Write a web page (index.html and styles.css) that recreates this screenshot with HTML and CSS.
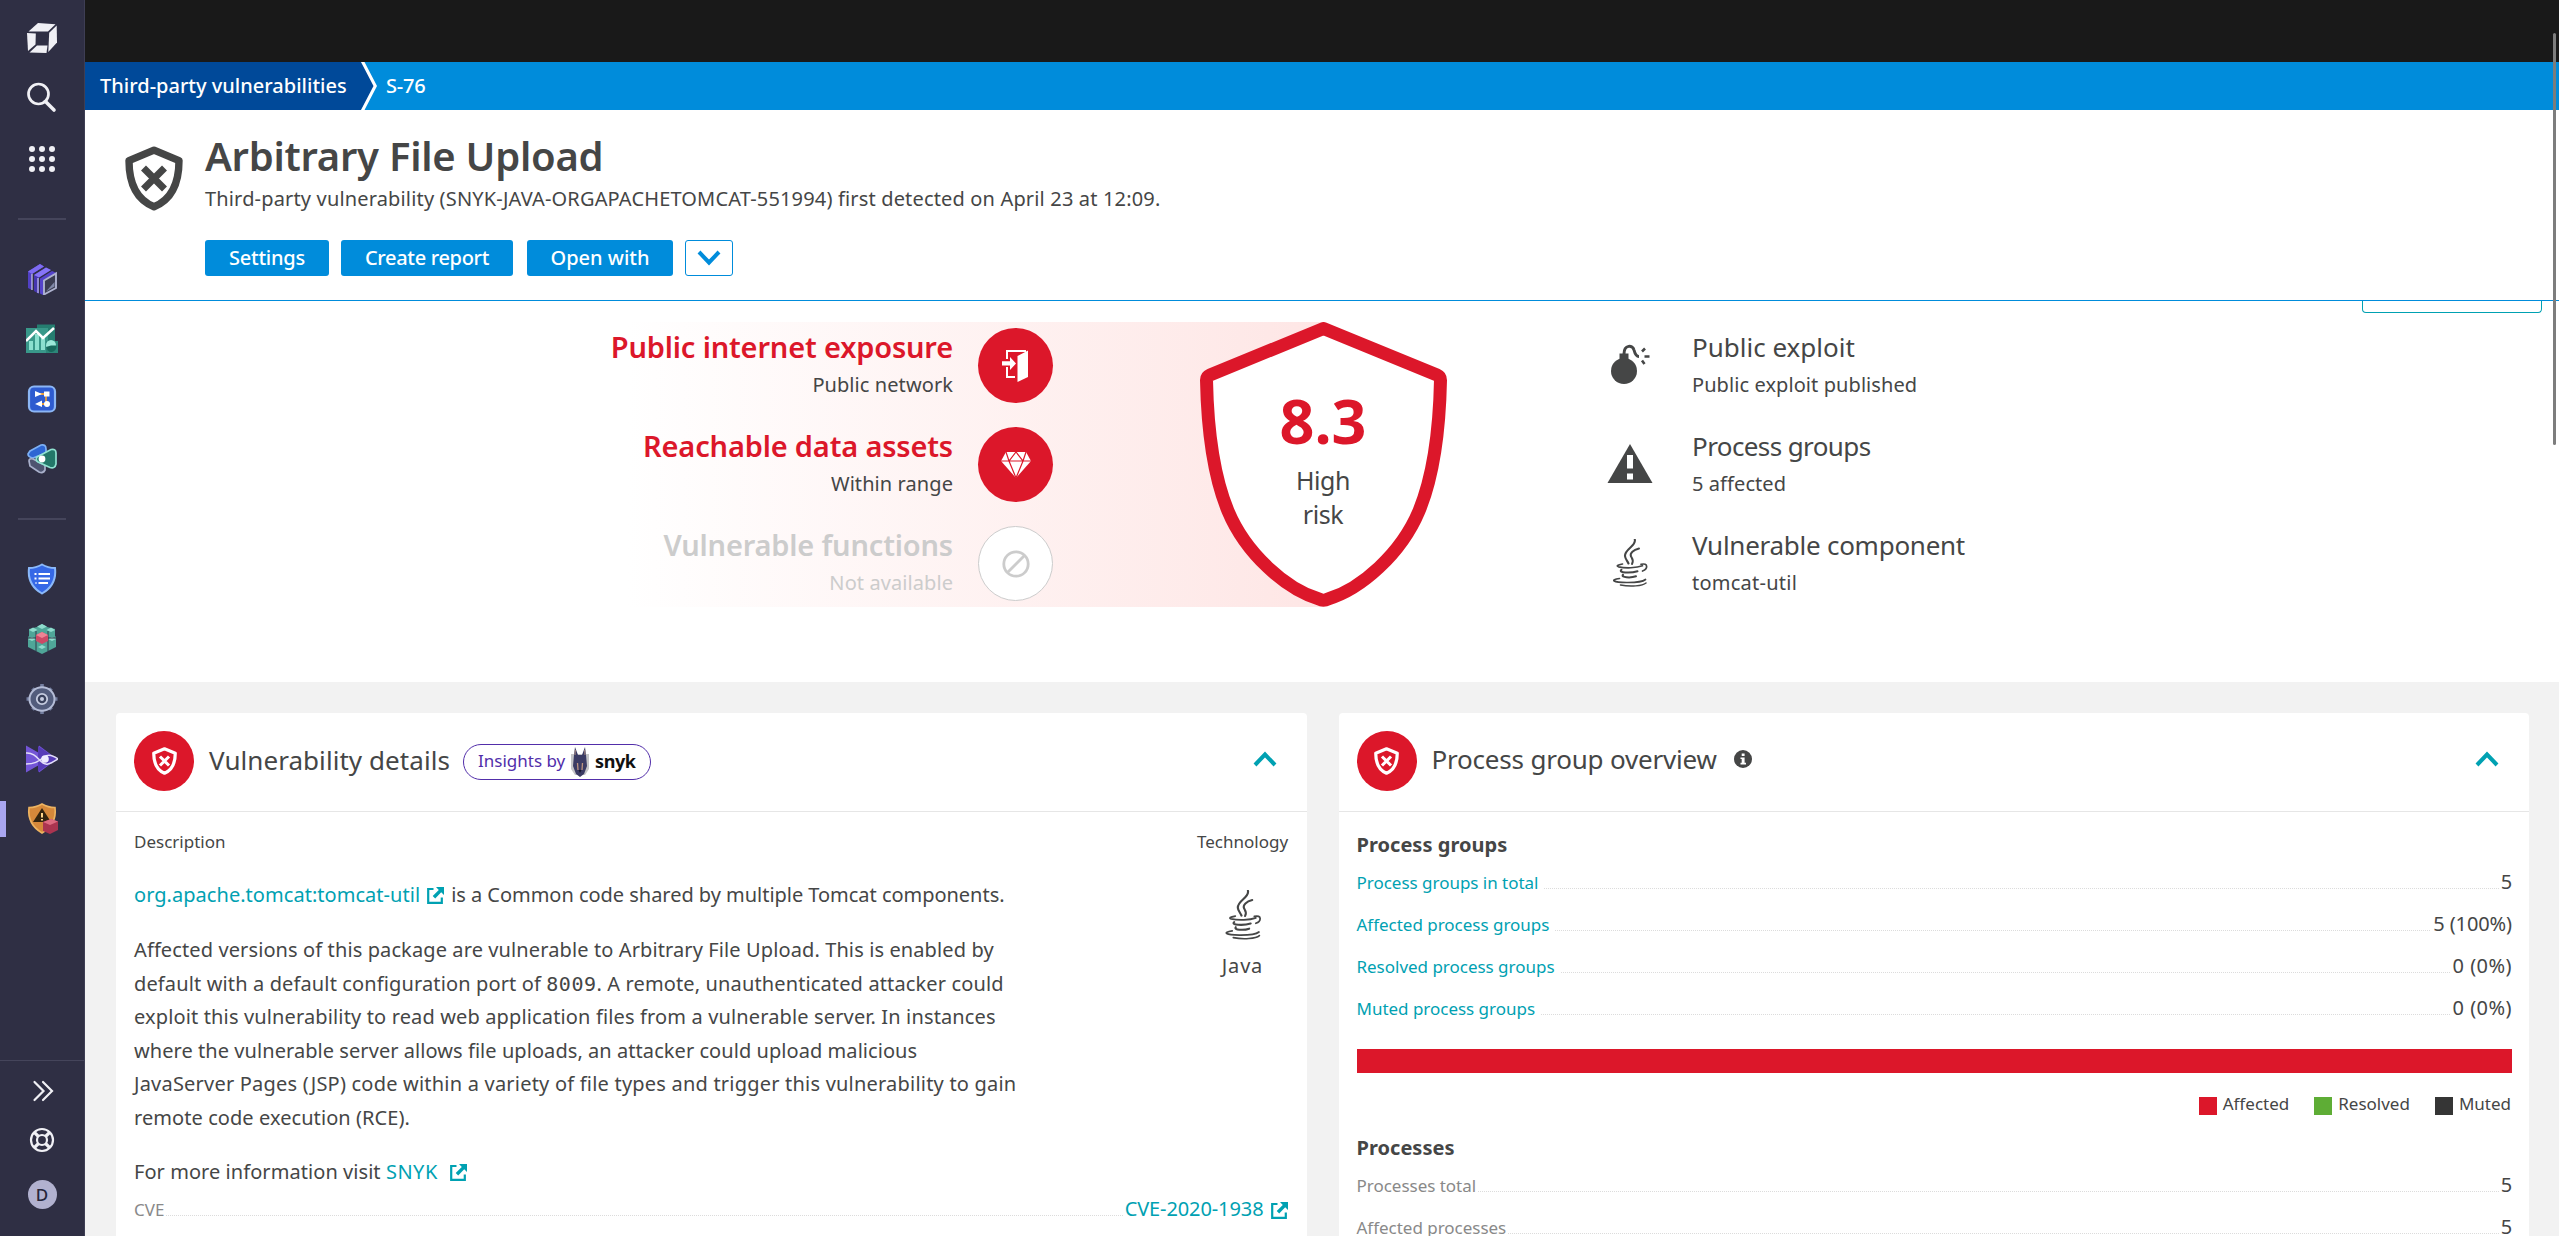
FILE: index.html
```
<!DOCTYPE html>
<html lang="en">
<head>
<meta charset="utf-8">
<title>Arbitrary File Upload</title>
<link rel="stylesheet" href="styles.css">
</head>
<body>
<svg width="0" height="0" class="defs">
  <defs>
    <symbol id="shield-x" viewBox="0 0 58 65">
      <path d="M29 4.2 L4 14.6 C4 39 12 54 29 60.8 C46 54 54 39 54 14.6 Z" fill="none" stroke="currentColor" stroke-width="7.4" stroke-linejoin="round"/>
      <path d="M18.500 22 L39.500 43 M39.500 22 L18.500 43" stroke="currentColor" stroke-width="7" fill="none"/>
    </symbol>
    <symbol id="java" viewBox="0 0 35 48">
      <g fill="none" stroke="currentColor" stroke-linecap="round">
        <path d="M22.300 .5 C24 7 12 10 12.500 17 C12.700 20 15 22 16 24.500" stroke-width="2.100"/>
        <path d="M26.500 9.500 C21 11 17 14 18.500 17.500 C20 20 21.500 21.500 19.500 25" stroke-width="2"/>
        <path d="M10 25 C5 26 3.500 27 6 27.800 C13 29.500 24 29 30 26.800" stroke-width="1.700"/>
        <path d="M28.500 25.300 C36 23.500 35.500 30 30 32" stroke-width="1.700"/>
        <path d="M9 30.800 C5 33.800 18 34.500 25 32.200" stroke-width="2"/>
        <path d="M10.500 35.800 C8 38.500 18 39.200 23.500 37.300" stroke-width="2"/>
        <path d="M7 39.500 C-3 41 .5 43.300 14 43.500 C24 43.600 30 43 33 40.500" stroke-width="1.700"/>
        <path d="M8 46 C18 48 30 47 33.500 44" stroke-width="1.500"/>
      </g>
    </symbol>
    <symbol id="ext" viewBox="0 0 17 17">
      <path d="M6.500 2 H1.200 V15.800 H14.800 V10.500" fill="none" stroke="currentColor" stroke-width="2.200"/>
      <path d="M9 0 H17 V8 L14.200 5.200 L8.200 11.500 L5.700 9 L11.800 2.900 Z" fill="currentColor"/>
    </symbol>
    <symbol id="chevron" viewBox="0 0 24 16">
      <path d="M2 14 L12 3.500 L22 14" fill="none" stroke="currentColor" stroke-width="4"/>
    </symbol>
  </defs>
</svg>
<div class="app">
  <nav class="sidebar">
    <svg class="nav-icon" viewBox="0 0 32 32"><g fill="#f0f0f5"><path d="M2.500 9.500 L12 1 L29.500 2.200 L22 9.500 Z"/><path d="M30.700 3.500 L31 20.500 L22.300 30 L23.200 10.800 Z"/><path d="M1 11 L9.800 11.500 L9.500 22.500 L2 29 Z"/><path d="M3.500 30.500 L11 23.500 L21.500 23.500 L20.500 31 Z"/></g></svg>
    <svg class="nav-icon" viewBox="0 0 32 32"><circle cx="12.500" cy="13" r="10" fill="none" stroke="#f0f0f5" stroke-width="2.700"/><path d="M19.500 20.500 L28 29" stroke="#f0f0f5" stroke-width="3.600" stroke-linecap="round"/></svg>
    <svg class="nav-icon" viewBox="0 0 32 32"><g fill="#f0f0f5"><circle cx="6" cy="6" r="3"/><circle cx="16" cy="6" r="3"/><circle cx="26" cy="6" r="3"/><circle cx="6" cy="16" r="3"/><circle cx="16" cy="16" r="3"/><circle cx="26" cy="16" r="3"/><circle cx="6" cy="26" r="3"/><circle cx="16" cy="26" r="3"/><circle cx="26" cy="26" r="3"/></g></svg>
    <div class="nav-rule"></div>
    <svg class="nav-icon" viewBox="0 0 32 32"><path d="M2 8.500 L14 1 L18 3.500 L6 11 V27 L2 25 Z" fill="#5140c4"/><path d="M2 8.500 L14 1 L18 3.500 L6 11 Z" fill="#7e6bf2"/><path d="M8 12 L20 4.500 L25 7 L13 14.500 V31 L8 28 Z" fill="#4636ae"/><path d="M8 12 L20 4.500 L25 7 L13 14.500 Z" fill="#8674f7"/><path d="M6 11 V27 M12 15 V30" stroke="#c9c6ee" stroke-width="1.200"/><path d="M14 15.500 L26 8 L30.500 10 L18 17 V32.500 L14 30.500 Z" fill="#5443cb"/><path d="M18 17.500 L30 10.500 V25 L18 31.500 Z" fill="#3b3d52" stroke="#aeb2cf" stroke-width="1.900"/><path d="M20 28.500 L28.500 23.500 V19 Z" fill="#8088a8"/></svg>
    <svg class="nav-icon" viewBox="0 0 32 32"><path d="M11 1.500 H29 V18 H11 Z" fill="#257d70"/><path d="M0 5 H22 V30 H0 Z" fill="#39988a"/><path d="M20 18 H32 V30 H20 Z" fill="#2c8779"/><path d="M3 18 H7 V27 H3 Z M9 11 H13 V27 H9 Z M15 15 H19 V27 H15 Z" fill="#8be0cf"/><ellipse cx="25" cy="22.500" rx="5" ry="5.500" fill="#9ce8d9"/><path d="M25 22.500 H30.500 A5 5.500 0 0 1 20 24 Z" fill="#17695c"/><path d="M0 18 L10 8 L17 15 L28 5" fill="none" stroke="#fff" stroke-width="2.500"/></svg>
    <svg class="nav-icon" viewBox="0 0 32 32"><rect x="3" y="3.500" width="26" height="25" rx="5" fill="#2e5bd0" stroke="#8bb6f5" stroke-width="2.200"/><path d="M13 11 H20 V21 H13" fill="none" stroke="#e59b3c" stroke-width="1.800"/><path d="M9 8 L16 11 L9 14 Z M16 17.500 L9 21 L16 24 Z" fill="#fff"/><path d="M18 8.500 H23.500 V13.500 H18 Z" fill="#fff"/><circle cx="21" cy="21" r="3" fill="#fff"/></svg>
    <svg class="nav-icon" viewBox="0 0 32 32"><path d="M4 8 L15 2 Q20 1 20 6 V10 L7 15 Q2 14 2 11 Z" fill="#2d66d3" stroke="#7db0f4" stroke-width="1.700"/><path d="M3 18 Q3 15 7 16 L19 22 V27 Q17 31 13 29 L4 23 Z" fill="#4d5470" stroke="#a9b0cb" stroke-width="1.700"/><path d="M11 14 L25 6.500 Q30 5.500 30 10 V21 Q29 26 24 24.500 L12 19 Q9 17 11 14 Z" fill="#237869" stroke="#8fe2d1" stroke-width="1.700"/><circle cx="16" cy="16" r="3.400" fill="#fff"/></svg>
    <div class="nav-rule"></div>
    <svg class="nav-icon" viewBox="0 0 32 32"><path d="M16 1.500 Q22 5 29 5 Q31 22 16 30.500 Q1 22 3 5 Q10 5 16 1.500 Z" fill="#3568e6" stroke="#8bb9fa" stroke-width="2"/><path d="M12.500 11 H24 M12.500 15.500 H24 M12.500 20 H22" stroke="#fff" stroke-width="1.800"/><path d="M8.500 11 H10.500 M8.500 15.500 H10.500 M9.500 20 H10.500" stroke="#fff" stroke-width="2"/></svg>
    <svg class="nav-icon" viewBox="0 0 32 32"><path d="M16 1 L21 4 L29 6 V13 L30 14 V24 L22 28 L16 31 L10 28 L2 24 V14 L3 13 V6 L11 4 Z" fill="#4fa698"/><path d="M16 1 L21 3.500 L16 6 L11 3.500 Z M7 4.500 L11.500 7 L7 9 L3 7 Z M25 4.500 L29 7 L25 9 L20.500 7 Z M6 14 L10 16 L6 18 L2 16 Z M26 14 L30 16 L26 18 L22 16 Z M16 22 L20 24 L16 26 L12 24 Z" fill="#8fdccd"/><path d="M10 8 V28 M22 8 V28 M2 15 H10 M22 15 H30" stroke="#2e3043" stroke-width=".9"/><path d="M16 9 L22 12 V18 L16 21 L10 18 V12 Z" fill="#cc4a66"/><path d="M16 9 L22 12 L16 15 L10 12 Z" fill="#ee8494"/></svg>
    <svg class="nav-icon" viewBox="0 0 32 32"><path d="M16 1 V31 M.5 16 H31.500 M6.500 5.500 L25.500 26.500 M25.500 5.500 L6.500 26.500" stroke="#747e9f" stroke-width="3.600"/><ellipse cx="16" cy="16" rx="12.500" ry="11.800" fill="#525c7c" stroke="#b4bcd6" stroke-width="2"/><circle cx="16" cy="16" r="5.200" fill="#39415c" stroke="#c6cce0" stroke-width="1.800"/><circle cx="16" cy="16" r="2" fill="#c6cce0"/></svg>
    <svg class="nav-icon" viewBox="0 0 32 32"><path d="M0 2.500 L13 10 V2.500 L31 16 L13 29.500 V22 L0 29.500 Z" fill="#7355d6"/><path d="M12 3 L31 16 L12 29 Z" fill="#573cb8"/><path d="M0 10 C12 9 14 23 22 21 C27 20 30 17 32 16 C28 13 23 10 18 14 C12 19 8 21 0 21" fill="none" stroke="#e3defa" stroke-width="1.500"/><circle cx="19" cy="16" r="3.800" fill="#eeebff"/></svg>
    <div class="nav-active">
      <svg class="nav-icon" viewBox="0 0 32 32"><path d="M16 1 Q22 4.500 29 4.500 Q31 21 16 30 Q1 21 3 4.500 Q10 4.500 16 1 Z" fill="#d5883a" stroke="#edb361" stroke-width="1.600"/><path d="M16 5 L25 19 H7 Z" fill="#33240f"/><path d="M16 10 V14.500 M16 16 V17.500" stroke="#ffd589" stroke-width="2"/><path d="M17 19 L25 16 L32 18.500 V27 L24 31 L17 28 Z" fill="#aa3450"/><path d="M17 19 L25 16 L32 18.500 L24 22 Z" fill="#dd6a80"/></svg>
    </div>
    <div class="nav-bottom">
      <svg class="nav-icon small-chev" viewBox="0 0 32 32"><path d="M8.500 7 L17.500 16 L8.500 25 M17 7 L26 16 L17 25" fill="none" stroke="#f0f0f5" stroke-width="2.200" stroke-linecap="round"/></svg>
      <svg class="nav-icon life" viewBox="0 0 32 32"><g fill="none" stroke="#f0f0f5" stroke-width="2.200"><circle cx="16" cy="16" r="11"/><circle cx="16" cy="16" r="5"/></g><path d="M8.300 8.300 L12.500 12.500 M23.700 8.300 L19.500 12.500 M8.300 23.700 L12.500 19.500 M23.700 23.700 L19.500 19.500" stroke="#f0f0f5" stroke-width="3.200"/></svg>
      <div class="avatar">D</div>
    </div>
  </nav>

  <main class="main">
    <div class="topbar"></div>
    <div class="crumbs">
      <span class="crumb-root">Third-party vulnerabilities</span>
      <svg class="crumb-arrow" width="17" height="48" viewBox="0 0 17 48"><path d="M0 0 L14 24 L0 48 Z" fill="#004999"/><path d="M0 0 H3.500 L16 24 L3.500 48 H0 L12.500 24 Z" fill="#fff"/></svg>
      <span class="crumb-current">S-76</span>
    </div>

    <header class="page-header">
      <svg class="page-icon"><use href="#shield-x"/></svg>
      <div>
        <h1>Arbitrary File Upload</h1>
        <p class="subtitle">Third-party vulnerability (SNYK-JAVA-ORGAPACHETOMCAT-551994) first detected on April 23 at 12:09.</p>
        <div class="actions">
          <span class="btn btn-settings">Settings</span>
          <span class="btn btn-report">Create report</span>
          <span class="btn btn-open">Open with</span>
          <span class="btn-more"><svg width="24" height="16"><use href="#chevron"/></svg></span>
        </div>
      </div>
    </header>

    <section class="overview">
      <div class="clipped-button"></div>
      <div class="risk">
        <div class="factors">
          <div class="factor">
            <div><div class="factor-title">Public internet exposure</div><div class="factor-sub">Public network</div></div>
            <div class="dot"><svg width="30" height="34" viewBox="0 0 30 34"><path d="M6 10 V2 H25 M6 18 V28 H14" fill="none" stroke="#fff" stroke-width="2"/><path d="M16.500 7 L27 1.500 V28 L16.500 33 Z" fill="#fff"/><path d="M1 12.300 H9 V8 L15 14.500 L9 21 V16.500 H1 Z" fill="#fff"/></svg></div>
          </div>
          <div class="factor">
            <div><div class="factor-title">Reachable data assets</div><div class="factor-sub">Within range</div></div>
            <div class="dot"><svg width="30" height="28" viewBox="0 0 30 28"><path d="M5 1 H25 L30 10 L15 27 L0 10 Z" fill="#fff"/><path d="M0 10 H30 M5 1 L8 10 L15 1 L22 10 L25 1 M8 10 L15 27 L22 10" fill="none" stroke="#dc172a" stroke-width="1.200"/></svg></div>
          </div>
          <div class="factor off">
            <div><div class="factor-title">Vulnerable functions</div><div class="factor-sub">Not available</div></div>
            <div class="dot"><svg width="28" height="28" viewBox="0 0 28 28"><g fill="none" stroke="#ccc" stroke-width="2.800"><circle cx="14" cy="14" r="12.200"/><path d="M22.500 5.500 L5.500 22.500"/></g></svg></div>
          </div>
        </div>
        <div class="score">
          <svg class="score-shield" viewBox="0 0 247 285"><path d="M123.500 6.500 L10 53 Q6.500 54.500 6.500 58 C7.500 108 13.500 154 28 189 C46 232 86 267 119 277 Q123.500 279.500 128 277 C161 267 201 232 219 189 C233.500 154 239.500 108 240.500 58 Q240.500 54.500 237 53 Z" fill="#fff" stroke="#dc172a" stroke-width="13" stroke-linejoin="round"/></svg>
          <div class="score-text"><span class="score-num">8.3</span><span class="score-word">High</span><span class="score-word">risk</span></div>
        </div>
      </div>
      <div class="facts">
        <div class="fact">
          <svg width="46" height="48" viewBox="0 0 46 48"><circle cx="17" cy="30" r="13" fill="#454646"/><path d="M12.500 12.500 H21.500 V20 H12.500 Z" fill="#454646"/><path d="M17 13 C17 3 26 4 27 9 C28 13 29 15.500 32 15.500" fill="none" stroke="#454646" stroke-width="3"/><path d="M35 10.500 L38 7.500 M37.500 15.500 H42.500 M35 19.500 L37.500 23" stroke="#454646" stroke-width="2.600"/></svg>
          <div><div class="fact-title t1">Public exploit</div><div class="factor-sub">Public exploit published</div></div>
        </div>
        <div class="fact">
          <svg width="46" height="48" viewBox="0 0 46 48"><path d="M23 4 L45.500 43 H.5 Z" fill="#454646"/><path d="M20 15 H26 V28.500 H20 Z M20 33.500 H26 V39.500 H20 Z" fill="#fff"/></svg>
          <div><div class="fact-title t2">Process groups</div><div class="factor-sub">5 affected</div></div>
        </div>
        <div class="fact">
          <svg width="46" height="48"><use href="#java"/></svg>
          <div><div class="fact-title t3">Vulnerable component</div><div class="factor-sub ls2">tomcat-util</div></div>
        </div>
      </div>
    </section>

    <div class="cards">
      <section class="card">
        <div class="card-head">
          <div class="badge"><svg width="25" height="28"><use href="#shield-x"/></svg></div>
          <h2 class="h-details">Vulnerability details</h2>
          <div class="pill"><span>Insights by</span>
            <svg width="18" height="30" viewBox="0 0 18 30"><path d="M0 7 H18 V22 L14 28 H4 L0 22 Z" fill="#c4c4c6"/><path d="M3 8 L4 0 L7 8 H11 L14 0 L15 8 L16 19 L13 27 L9 30 L5 27 L2 19 Z" fill="#3b3b63"/><path d="M4.300 3 L4 8 M13.700 3 L14 8" stroke="#a98b80" stroke-width="1"/><path d="M6.500 16 L7 23 M11.500 16 L11 23" stroke="#bd947f" stroke-width="1.300"/><path d="M7.500 23 H10.500 L9 26 Z" fill="#15152b"/></svg>
            <b>snyk</b></div>
          <svg class="toggle" width="24" height="16"><use href="#chevron"/></svg>
        </div>
        <div class="card-body">
          <div class="detail">
            <div class="desc">
              <div class="small-label">Description</div>
              <p class="p1"><a class="lib">org.apache.tomcat:tomcat-util</a><svg class="ext"><use href="#ext"/></svg>is a Common code shared by multiple Tomcat components.</p>
              <p class="p2"><span class="l1">Affected versions of this package are vulnerable to Arbitrary File Upload. This is enabled by</span><br><span class="l2">default with a default configuration port of <code>8009</code>. A remote, unauthenticated attacker could</span><br><span class="l3">exploit this vulnerability to read web application files from a vulnerable server. In instances</span><br><span class="l4">where the vulnerable server allows file uploads, an attacker could upload malicious</span><br><span class="l5">JavaServer Pages (JSP) code within a variety of file types and trigger this vulnerability to gain</span><br><span class="l6">remote code execution (RCE).</span></p>
              <p class="p3">For more information visit <a class="snyk-link">SNYK</a><svg class="ext ext-wide"><use href="#ext"/></svg></p>
            </div>
            <div class="tech">
              <div class="small-label">Technology</div>
              <svg width="36" height="50"><use href="#java"/></svg>
              <div class="tech-name">Java</div>
            </div>
          </div>
          <div class="row cve"><span class="label">CVE</span><i class="dots"></i><span class="value"><a>CVE-2020-1938</a><svg class="ext ext-end"><use href="#ext"/></svg></span></div>
        </div>
      </section>

      <section class="card">
        <div class="card-head">
          <div class="badge"><svg width="25" height="28"><use href="#shield-x"/></svg></div>
          <h2 class="h-groups">Process group overview</h2>
          <svg class="info" width="18" height="18" viewBox="0 0 18 18"><circle cx="9" cy="9" r="9" fill="#454646"/><path d="M7.700 3.400 H10.600 V6 H7.700 Z M6.500 7.500 H10.600 V12.800 H12 V14.500 H6.500 V12.800 H7.700 V9.100 H6.500 Z" fill="#fff"/></svg>
          <svg class="toggle" width="24" height="16"><use href="#chevron"/></svg>
        </div>
        <div class="card-body">
          <h3>Process groups</h3>
          <div class="row link"><span class="label">Process groups in total</span><i class="dots"></i><span class="value">5</span></div>
          <div class="row link"><span class="label">Affected process groups</span><i class="dots"></i><span class="value">5 (100%)</span></div>
          <div class="row link"><span class="label">Resolved process groups</span><i class="dots"></i><span class="value pct">0 (0%)</span></div>
          <div class="row link"><span class="label">Muted process groups</span><i class="dots"></i><span class="value pct">0 (0%)</span></div>
          <div class="bar"></div>
          <div class="legend"><i class="sw red"></i><span>Affected</span><i class="sw green"></i><span>Resolved</span><i class="sw dark"></i><span>Muted</span></div>
          <h3>Processes</h3>
          <div class="row"><span class="label">Processes total</span><i class="dots"></i><span class="value">5</span></div>
          <div class="row"><span class="label">Affected processes</span><i class="dots"></i><span class="value">5</span></div>
        </div>
      </section>
    </div>
  </main>
  <div class="scroll-thumb"></div>
</div>
</body>
</html>
```
FILE: styles.css
```
* { box-sizing: border-box; }
body {
  margin: 0;
  height: 1236px;
  overflow: hidden;
  font: 400 20px/30px "Noto Sans", sans-serif;
  color: #454646;
  background: #f2f2f2;
}
h1, h2, h3, p { margin: 0; }
svg { display: block; flex: none; }
.defs { position: absolute; }
a { color: #00a1b2; }

.app { display: flex; height: 1236px; overflow: hidden; position: relative; }

/* Sidebar */
.sidebar {
  width: 85px;
  flex: none;
  height: 1236px;
  background: #2f2f44;
  border-right: 1px solid #3e3e54;
  display: flex;
  flex-direction: column;
  align-items: center;
  padding-top: 22px;
  gap: 28px;
}
.nav-icon { width: 32px; height: 32px; }
.sidebar > .nav-icon:nth-child(2) { margin-top: -1px; }
.sidebar > .nav-icon:nth-child(3) { margin-top: 2px; }
.nav-rule { width: 48px; height: 2px; background: #45455b; margin: 15px 0 15px; }
.nav-active {
  width: 84px;
  height: 36px;
  margin-top: -2px;
  display: flex;
  align-items: center;
  justify-content: center;
  background: linear-gradient(#a9a6f0, #a9a6f0) 0 0 / 6px 100% no-repeat;
}
.nav-bottom {
  width: 84px;
  margin-top: auto;
  height: 176px;
  border-top: 1px solid #45455b;
  display: flex;
  flex-direction: column;
  align-items: center;
  padding-top: 14px;
}
.life { margin-top: 17px; }
.avatar {
  margin-top: 24px;
  width: 29px;
  height: 29px;
  border-radius: 50%;
  background: #b1b1cf;
  color: #26263a;
  font-size: 17px;
  font-weight: 500;
  line-height: 29px;
  text-align: center;
}

/* Page top */
.main { flex: 1; min-width: 0; }
.topbar { height: 62px; background: #191919; }
.crumbs {
  height: 48px;
  background: #008cdb;
  color: #fff;
  display: flex;
  font-weight: 500;
  line-height: 47px;
}
.crumb-root { background: #004999; width: 276px; padding-left: 15px; white-space: nowrap; }
.crumb-arrow { margin-right: 8px; }
.crumb-current { letter-spacing: -.2px; }

.page-header {
  height: 191px;
  background: #fff;
  border-bottom: 1px solid #008cdb;
  display: flex;
  padding: 22px 0 0 40px;
  gap: 22px;
}
.page-icon { width: 58px; height: 65px; margin-top: 14px; }
h1 { font-size: 40px; line-height: 48px; font-weight: 600; letter-spacing: -.26px; }
.subtitle { margin-top: 4px; letter-spacing: .16px; white-space: nowrap; }
.actions { display: flex; margin-top: 26px; }
.btn {
  height: 36px;
  border-radius: 3px;
  background: #008cdb;
  color: #fff;
  font-weight: 500;
  line-height: 36px;
  text-align: center;
}
.btn-settings { width: 124px; letter-spacing: -.23px; }
.btn-report { width: 172px; margin-left: 12px; letter-spacing: -.33px; }
.btn-open { width: 146px; margin-left: 14px; }
.btn-more {
  width: 48px;
  height: 36px;
  margin-left: 12px;
  border: 1px solid #008cdb;
  border-radius: 3px;
  color: #008cdb;
  display: flex;
  align-items: center;
  justify-content: center;
}
.btn-more svg { transform: rotate(180deg); }

/* Risk overview */
.overview {
  height: 381px;
  background: #fff;
  display: flex;
  position: relative;
  padding: 21px 0 0 523px;
}
.clipped-button {
  position: absolute;
  top: 0;
  right: 17px;
  width: 180px;
  height: 12px;
  border: 1px solid #00a1b2;
  border-top: 0;
  border-radius: 0 0 4px 4px;
}
.risk {
  width: 839px;
  height: 285px;
  display: flex;
  justify-content: space-between;
  background: linear-gradient(to right, #fff 20px, #fee6e5 100%) 0 0 / 715px 100% no-repeat;
}
.factors { width: 445px; padding-top: 6px; display: flex; flex-direction: column; gap: 24px; }
.factor { display: flex; height: 75px; justify-content: flex-end; gap: 25px; text-align: right; white-space: nowrap; }
.factor-title { font-size: 29px; line-height: 38px; font-weight: 600; letter-spacing: -.17px; color: #dc172a; }
.factor-sub { margin-top: 5px; line-height: 28px; letter-spacing: .08px; }
.dot {
  width: 75px;
  height: 75px;
  border-radius: 50%;
  background: #dc172a;
  display: flex;
  align-items: center;
  justify-content: center;
}
.off .factor-title, .off .factor-sub { color: #ccc; }
.off .dot { background: #fff; border: 1px solid #ccc; }
.score { display: grid; width: 247px; }
.score > * { grid-area: 1 / 1; }
.score-shield { width: 247px; height: 285px; }
.score-text { display: flex; flex-direction: column; align-items: center; padding: 64px 1px 0 0; }
.score-num { font-size: 61px; line-height: 70px; font-weight: 700; color: #dc172a; height: 77px; }
.score-word { font-size: 25px; line-height: 34px; letter-spacing: -.4px; }

.facts { margin-left: 160px; padding-top: 6px; display: flex; flex-direction: column; gap: 24px; }
.fact { display: flex; height: 75px; gap: 39px; white-space: nowrap; }
.fact svg { margin: 13px 0 0; }
.fact-title { font-size: 26px; line-height: 38px; }
.t1 { letter-spacing: 0; }
.t2 { letter-spacing: -.6px; }
.t3 { letter-spacing: -.26px; }
.ls2 { letter-spacing: .24px; }

/* Cards */
.cards { display: grid; grid-template-columns: 1fr 1fr; gap: 32px; padding: 31px 30px 0 31px; }
.card { background: #fff; border-radius: 4px; height: 560px; }
.card-head {
  height: 99px;
  border-bottom: 1px solid #e6e6e6;
  display: flex;
  align-items: center;
  padding: 0 30px 6px 18px;
}
.badge {
  width: 60px;
  height: 60px;
  margin-top: 4px;
  border-radius: 50%;
  background: #dc172a;
  color: #fff;
  display: flex;
  align-items: center;
  justify-content: center;
}
h2 { font-size: 26px; line-height: 36px; font-weight: 400; margin: 1px 0 0 15px; white-space: nowrap; }
.h-details { letter-spacing: .06px; width: 244px; }
.h-groups { margin: -1px 0 0 15px; letter-spacing: -.2px; width: 287px; }
.pill {
  width: 188px;
  height: 36px;
  margin: 5px 0 0 10px;
  border: 1px solid #522eaa;
  border-radius: 18px;
  display: flex;
  align-items: center;
  padding: 0 0 0 14px;
  white-space: nowrap;
}
.pill span { font-size: 17px; color: #522eaa; width: 86px; margin-top: -2px; }
.pill svg { margin-left: 7px; }
.pill b { margin-left: 6px; font-size: 18px; letter-spacing: -.4px; color: #111; margin-top: -2px; }
.info { margin: 0 0 0 15px; }
.toggle { margin-left: auto; color: #00a1b2; }
.card-body { padding: 18px 17px 0 18px; }

.small-label, .label, .legend { font-size: 17px; line-height: 26px; white-space: nowrap; }
.small-label { margin-top: -1px; }
.detail { display: flex; justify-content: space-between; }
.desc p { line-height: 33.6px; white-space: nowrap; }
.p1 { margin-top: 23px; display: flex; letter-spacing: -.03px; }
.lib { letter-spacing: .04px; }
.ext { width: 17px; height: 17px; margin: 9px 7px 0 7px; color: #00a1b2; }
.desc .p2 { margin-top: 21.500px; }
.l1 { letter-spacing: .11px; }
.l2 { letter-spacing: .13px; }
.l3 { letter-spacing: .14px; }
.l4 { letter-spacing: .06px; }
.l5 { letter-spacing: .21px; }
.l6 { letter-spacing: .07px; }
code { font: 20px/1 "DejaVu Sans Mono", monospace; letter-spacing: .5px; }
.desc .p3 { margin-top: 20px; display: flex; white-space: pre; letter-spacing: .06px; }
.snyk-link { letter-spacing: .5px; }
.ext-wide { margin-left: 12px; }
.tech { width: 90px; margin-right: 2px; display: flex; flex-direction: column; align-items: center; }
.tech svg { margin-top: 35px; }
.tech-name { margin-top: 11px; letter-spacing: .8px; }

.row { display: flex; align-items: baseline; height: 42px; white-space: nowrap; }
.dots { flex: 1; height: 1px; margin: 0 2px 2px; background: repeating-linear-gradient(to right, #dcdcdc 0 1px, transparent 1px 2px); }
.label { color: #898989; letter-spacing: -.02px; }
.link .label { color: #00a1b2; }
.link .dots { margin-left: 6px; }
.value { letter-spacing: -.1px; }
.pct { letter-spacing: .45px; }
.cve { margin-top: 6px; }
.cve .value { display: flex; }
.ext-end { margin: 8px 2px 0 7px; }
h3 { font-size: 20px; line-height: 30px; font-weight: 700; margin-bottom: 7px; letter-spacing: .03px; }
.bar { height: 24px; margin-top: 14px; background: #dc172a; }
.legend { display: flex; justify-content: flex-end; margin: 18px 0 16px; padding-right: 1px; }
.sw { width: 18px; height: 18px; margin: 6px 6px 0 25px; }
.red { background: #dc172a; }
.green { background: #5ead35; }
.dark { background: #353535; }

.scroll-thumb {
  position: absolute;
  top: 33px;
  right: 3px;
  width: 3px;
  height: 412px;
  background: #7d7d7d;
  border-radius: 2px;
}
```
